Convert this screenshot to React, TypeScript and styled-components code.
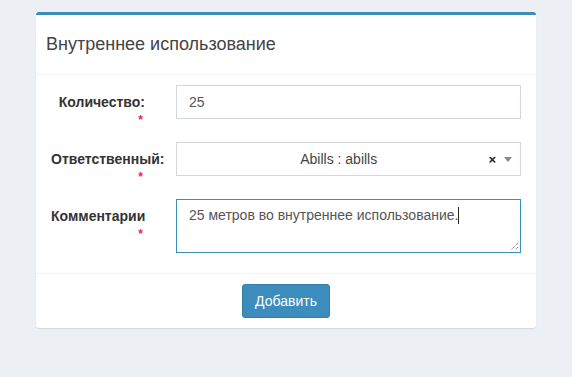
import styled, { createGlobalStyle } from "styled-components";

const Global = createGlobalStyle`
  body {
    margin: 0;
    background-color: #ecf0f5;
    font-family: "Liberation Sans", Arial, sans-serif;
    font-size: 14px;
    color: #333;
  }
`;

const Page = styled.div`
  padding: 12px 36px;
`;

const Box = styled.div`
  width: 500px;
  background-color: #fff;
  border-top: 3px solid #3c8dbc;
  border-radius: 3px;
  box-shadow: 0 1px 1px rgba(0, 0, 0, 0.1);
`;

const Header = styled.div`
  height: 59px;
  display: flex;
  align-items: center;
  padding: 0 10px;
  border-bottom: 1px solid #f4f4f4;
`;

const Title = styled.h3`
  margin: 0;
  font-size: 18px;
  font-weight: normal;
  color: #444;
`;

const Body = styled.div`
  padding: 10px 15px 20px 15px;
  display: flex;
  flex-direction: column;
  gap: 23px;
`;

const Row = styled.div`
  display: grid;
  grid-template-columns: 94px 1fr;
  column-gap: 31px;
  align-items: start;
`;

const Label = styled.label`
  height: 34px;
  box-sizing: border-box;
  padding-top: 7px;
  font-weight: bold;
  line-height: 20px;
  text-align: right;
  white-space: nowrap;
  color: #333;
`;

const Required = styled.span`
  display: block;
  color: #f2225a;
  font-size: 12px;
  font-weight: bold;
  line-height: 16px;
  padding-right: 2px;
`;

const Input = styled.div`
  height: 34px;
  box-sizing: border-box;
  border: 1px solid #d2d6de;
  padding: 0 12px;
  display: flex;
  align-items: center;
  color: #555;
`;

const Select = styled.div`
  height: 34px;
  box-sizing: border-box;
  border: 1px solid #d2d6de;
  display: flex;
  align-items: center;
  padding: 0 8px 0 12px;
  color: #444;
`;

const SelectText = styled.span`
  flex: 1;
  text-align: center;
`;

const Clear = styled.span`
  font-size: 13px;
  font-weight: bold;
  color: #222;
  margin-right: 8px;
`;

const Arrow = styled.span`
  width: 0;
  height: 0;
  border-left: 4px solid transparent;
  border-right: 4px solid transparent;
  border-top: 5px solid #888;
`;

const TextArea = styled.div`
  position: relative;
  height: 54px;
  box-sizing: border-box;
  border: 1px solid #3c8dbc;
  padding: 5px 12px;
  line-height: 20px;
  color: #555;
`;

const Caret = styled.span`
  display: inline-block;
  width: 1px;
  height: 17px;
  background-color: #222;
  vertical-align: -4px;
`;

const Grip = styled.svg`
  position: absolute;
  right: 1px;
  bottom: 1px;
`;

const Footer = styled.div`
  border-top: 1px solid #f4f4f4;
  padding: 10px;
  display: flex;
  justify-content: center;
`;

const Button = styled.button`
  height: 34px;
  padding: 0 12px;
  border: 1px solid #367fa9;
  border-radius: 3px;
  background-color: #3c8dbc;
  color: #fff;
  font-family: "Liberation Sans", Arial, sans-serif;
  font-size: 14px;
`;

export default function App() {
  return (
    <Page>
      <Global />
      <Box>
        <Header>
          <Title>Внутреннее использование</Title>
        </Header>
        <Body>
          <Row>
            <Label>
              Количество:
              <Required>*</Required>
            </Label>
            <Input>25</Input>
          </Row>
          <Row>
            <Label>
              Ответственный:
              <Required>*</Required>
            </Label>
            <Select>
              <SelectText>Abills : abills</SelectText>
              <Clear>×</Clear>
              <Arrow />
            </Select>
          </Row>
          <Row>
            <Label>
              Комментарии
              <Required>*</Required>
            </Label>
            <TextArea>
              25 метров во внутреннее использование.
              <Caret />
              <Grip width="10" height="10" viewBox="0 0 10 10">
                <path d="M9 2 L2 9 M9 6 L6 9" stroke="#555" strokeWidth="1" strokeDasharray="1 1" />
              </Grip>
            </TextArea>
          </Row>
        </Body>
        <Footer>
          <Button>Добавить</Button>
        </Footer>
      </Box>
    </Page>
  );
}
